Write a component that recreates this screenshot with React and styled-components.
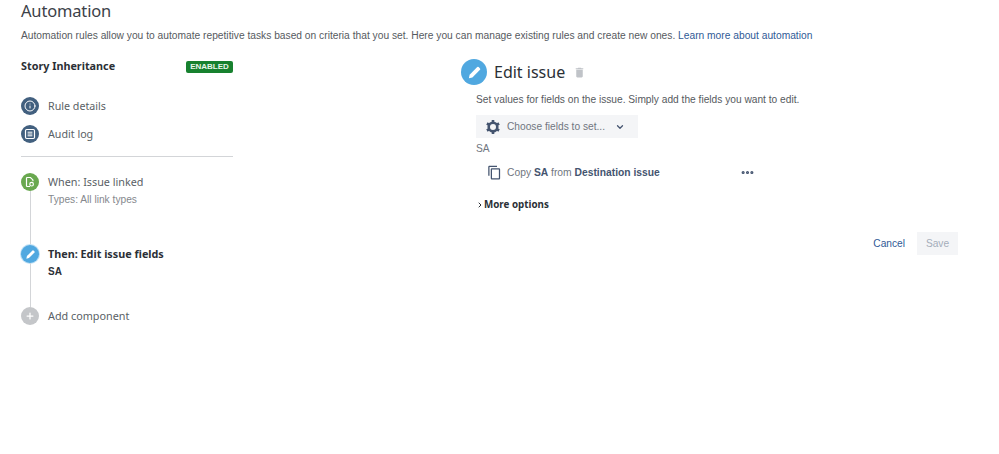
import styled, { createGlobalStyle } from "styled-components"
import { Info, Plus, ChevronDown, ChevronRight, MoreHorizontal } from "lucide-react"
import { MdContentCopy, MdDelete } from "react-icons/md"

const GlobalStyle = createGlobalStyle`
html, body {
    margin: 0;
    background: #fff;
}
body {
    font-family: "Liberation Sans", Arial, sans-serif;
    color: #172b4d;
}
`

const Page = styled.main`
width: 999px;
height: 454px;
box-sizing: border-box;
padding: 0 41px 0 21px;
overflow: hidden;
`

const Title = styled.h1`
margin: 0;
height: 24px;
font: 400 16.5px/21px "Noto Sans", sans-serif;
letter-spacing: -0.17px;
color: #3c4148;
`

const Intro = styled.p`
margin: 4px 0 0;
font-size: 10.24px;
line-height: 16px;
color: #565a60;

a {
    color: #2f5a96;
    text-decoration: none;
}
`

const Columns = styled.div`
display: grid;
grid-template-columns: 212px 497px;
column-gap: 228px;
margin-top: 13px;
`

const Sidebar = styled.aside`
display: flex;
flex-direction: column;
`

const RuleHeader = styled.div`
display: flex;
align-items: center;
justify-content: space-between;
height: 18px;
`

const RuleName = styled.span`
font: 700 10.8px/18px "Noto Sans", sans-serif;
color: #2b3036;
`

const Badge = styled.span`
width: 47px;
height: 12px;
margin-top: 2px;
border-radius: 2px;
background: #17812f;
color: #e8f5ea;
font-size: 8px;
font-weight: 700;
line-height: 12px;
text-align: center;
`

const NavList = styled.nav`
display: flex;
flex-direction: column;
gap: 10px;
margin-top: 22px;
padding-bottom: 13px;
border-bottom: 1px solid #d3d5d8;
`

const NavItem = styled.div`
display: flex;
align-items: center;
gap: 9px;
font: 400 10.7px/18px "Noto Sans", sans-serif;
color: #5a5f66;
`

const Dot = styled.span`
flex: none;
display: flex;
align-items: center;
justify-content: center;
width: ${({ $size }) => $size || 18}px;
height: ${({ $size }) => $size || 18}px;
border-radius: 50%;
background: ${({ $bg }) => $bg};
color: #fff;
box-shadow: ${({ $ring }) => ($ring ? "0 0 0 1px #bfe0f5" : "none")};
`

const Steps = styled.div`
display: flex;
flex-direction: column;
margin-top: 16px;
`

const Step = styled.div`
position: relative;
display: flex;
gap: 9px;
height: ${({ $h }) => $h}px;
`

// connector between two step dots
const Line = styled.span`
position: absolute;
left: 9px;
top: 18px;
bottom: 0;
width: 1px;
background: #d3d5d8;
`

const StepText = styled.div`
display: flex;
flex-direction: column;
`

const StepTitle = styled.span`
font: ${({ $active }) => ($active ? 700 : 400)} 10.8px/18px "Noto Sans", sans-serif;
color: ${({ $active }) => ($active ? "#2b3036" : "#5a5f66")};
`

const StepSub = styled.span`
margin-top: 1px;
font-size: ${({ $active }) => ($active ? "10px" : "10.2px")};
font-weight: ${({ $active }) => ($active ? 700 : 400)};
line-height: 16px;
color: ${({ $active }) => ($active ? "#2b3036" : "#85888d")};
`

const Panel = styled.section`
display: flex;
flex-direction: column;
margin-top: 2px;
`

const PanelHead = styled.div`
display: flex;
align-items: center;
gap: 7px;
height: 26px;
`

const PanelTitle = styled.h2`
margin: 0;
font: 400 16px/26px "Noto Sans", sans-serif;
color: #2b3036;
`

const PanelBody = styled.div`
display: flex;
flex-direction: column;
align-items: flex-start;
padding-left: 15px;
`

const Help = styled.p`
margin: 7px 0 0;
font-size: 10.2px;
line-height: 16px;
color: #565a60;
`

const Select = styled.div`
display: flex;
align-items: center;
width: 162px;
height: 23px;
margin-top: 7px;
padding-left: 9px;
box-sizing: border-box;
background: #f4f5f7;
font-size: 10.2px;
color: #707680;
`

const SelectLabel = styled.span`
margin: 0 10px 0 6px;
`

const FieldLabel = styled.div`
margin-top: 3px;
font-size: 10.2px;
line-height: 16px;
color: #707680;
`

const CopyRow = styled.div`
display: flex;
align-items: center;
width: 279px;
height: 16px;
margin-top: 7px;
padding-left: 11px;
box-sizing: border-box;
font-size: 10.3px;
color: #707680;

b {
    color: #44546f;
}
`

const CopyText = styled.span`
flex: 1;
margin-left: 5px;
`

const MoreOptions = styled.div`
display: flex;
align-items: center;
margin-top: 17px;
font: 700 9.8px/16px "Noto Sans", sans-serif;
color: #2b3036;
`

const Actions = styled.div`
display: flex;
justify-content: flex-end;
align-items: center;
gap: 12px;
margin-top: 19px;
`

const CancelLink = styled.a`
font-size: 10.2px;
color: #2f5a96;
`

const SaveButton = styled.button`
width: 41px;
height: 23px;
padding: 0;
border: 0;
background: #f4f5f7;
color: #a5adba;
font: 400 10.2px "Liberation Sans", sans-serif;
`

const TrashIcon = styled(MdDelete)`
margin-left: 1px;
`

const AuditIcon = () => (
    <svg width="12" height="12" viewBox="0 0 12 12" fill="none" stroke="#fff" strokeWidth="1.2">
        <rect x="1.5" y="1.5" width="9" height="9" rx="1.2" />
        <path d="M3.6 4.2h4.8M3.6 6h4.8M3.6 7.8h4.8" strokeWidth="1" />
    </svg>
)

const TriggerIcon = () => (
    <svg width="12" height="12" viewBox="0 0 12 12" fill="none" stroke="#fff" strokeWidth="1.2">
        <path d="M6 10.5H3.2a.7.7 0 0 1-.7-.7V2.2a.7.7 0 0 1 .7-.7h3.3l2.4 2.4v1.4" />
        <circle cx="7.6" cy="8.2" r="1.8" />
    </svg>
)

const PencilIcon = ({ size }) => (
    <svg width={size} height={size} viewBox="0 0 12 12">
        <path d="M8.2 1.6a.8.8 0 0 1 1.1 0l1.1 1.1a.8.8 0 0 1 0 1.1L4.3 9.9 1.5 10.5l.6-2.8z" fill="#fff" />
    </svg>
)

const GearIcon = () => (
    <svg width="16" height="16" viewBox="0 0 16 16" fill="none" stroke="#44546f">
        <circle cx="8" cy="8" r="4.3" strokeWidth="2.6" />
        <path d="M8 1v2.4M8 12.6V15M1.9 4.5L4 5.7M12 10.3l2.1 1.2M1.9 11.5L4 10.3M12 5.7l2.1-1.2" strokeWidth="2.6" />
    </svg>
)

const App = () => {
    return (
        <Page>
            <GlobalStyle />
            <Title>Automation</Title>
            <Intro>
                Automation rules allow you to automate repetitive tasks based on criteria that you set. Here you can manage existing rules and create new ones. <a href="#learn">Learn more about automation</a>
            </Intro>
            <Columns>
                <Sidebar>
                    <RuleHeader>
                        <RuleName>Story Inheritance</RuleName>
                        <Badge>ENABLED</Badge>
                    </RuleHeader>
                    <NavList>
                        <NavItem>
                            <Dot $bg="#42607f"><Info size={12} strokeWidth={2} /></Dot>
                            Rule details
                        </NavItem>
                        <NavItem>
                            <Dot $bg="#42607f"><AuditIcon /></Dot>
                            Audit log
                        </NavItem>
                    </NavList>
                    <Steps>
                        <Step $h={72}>
                            <Dot $bg="#69a84f"><TriggerIcon /></Dot>
                            <Line />
                            <StepText>
                                <StepTitle>When: Issue linked</StepTitle>
                                <StepSub>Types: All link types</StepSub>
                            </StepText>
                        </Step>
                        <Step $h={62}>
                            <Dot $bg="#50a8e0" $ring><PencilIcon size={11} /></Dot>
                            <Line />
                            <StepText>
                                <StepTitle $active>Then: Edit issue fields</StepTitle>
                                <StepSub $active>SA</StepSub>
                            </StepText>
                        </Step>
                        <Step $h={18}>
                            <Dot $bg="#c4c6c9"><Plus size={10} strokeWidth={3} /></Dot>
                            <StepTitle>Add component</StepTitle>
                        </Step>
                    </Steps>
                </Sidebar>
                <Panel>
                    <PanelHead>
                        <Dot $bg="#50a8e0" $size={26}><PencilIcon size={15} /></Dot>
                        <PanelTitle>Edit issue</PanelTitle>
                        <TrashIcon size={13} color="#c0c3c8" />
                    </PanelHead>
                    <PanelBody>
                        <Help>Set values for fields on the issue. Simply add the fields you want to edit.</Help>
                        <Select>
                            <GearIcon />
                            <SelectLabel>Choose fields to set...</SelectLabel>
                            <ChevronDown size={10} color="#44546f" strokeWidth={3} />
                        </Select>
                        <FieldLabel>SA</FieldLabel>
                        <CopyRow>
                            <MdContentCopy size={15} color="#44546f" />
                            <CopyText>Copy <b>SA</b> from <b>Destination issue</b></CopyText>
                            <MoreHorizontal size={15} color="#44546f" strokeWidth={3} />
                        </CopyRow>
                        <MoreOptions>
                            <ChevronRight size={8} strokeWidth={3} />
                            More options
                        </MoreOptions>
                    </PanelBody>
                    <Actions>
                        <CancelLink>Cancel</CancelLink>
                        <SaveButton disabled>Save</SaveButton>
                    </Actions>
                </Panel>
            </Columns>
        </Page>
    )
}

export default App
